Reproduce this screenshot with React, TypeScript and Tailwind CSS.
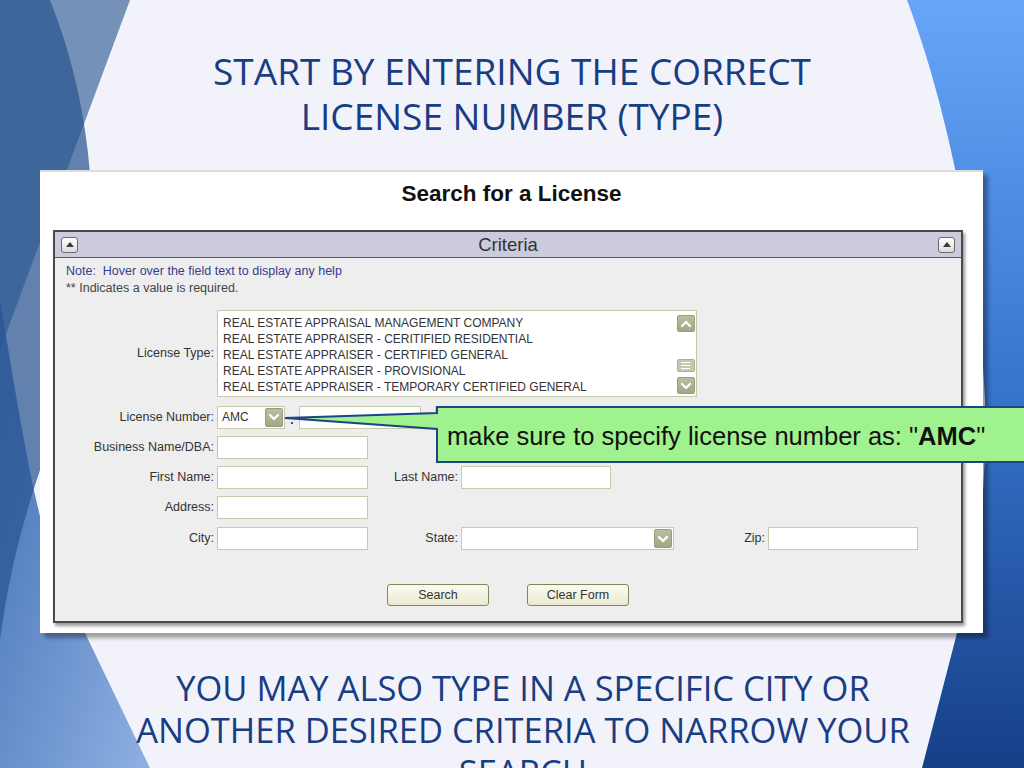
import React from 'react';

const ARIAL = { fontFamily: '"Liberation Sans", Arial, sans-serif' };

const Chevron = ({ up = false }: { up?: boolean }) => (
  <svg width="12" height="10" viewBox="0 0 12 10">
    <path
      d={up ? 'M2 7 L6 3 L10 7' : 'M2 3 L6 7 L10 3'}
      fill="none"
      stroke="#fff"
      strokeWidth="2.4"
      strokeLinecap="round"
      strokeLinejoin="round"
    />
  </svg>
);

const OliveButton = ({ up = false, className = '' }: { up?: boolean; className?: string }) => (
  <div
    className={`flex items-center justify-center rounded-[2px] border border-[#969e7e] bg-gradient-to-b from-[#b8bfa2] to-[#a0a887] ${className}`}
  >
    <Chevron up={up} />
  </div>
);

const CollapseButton = () => (
  <div className="flex h-[16px] w-[17px] items-center justify-center rounded-[3px] border border-[#6b6b6b] bg-gradient-to-b from-white to-[#dcdcdc]">
    <svg width="10" height="7" viewBox="0 0 10 7">
      <path d="M1 6 L5 1 L9 6 Z" fill="#3c3c3c" />
    </svg>
  </div>
);

const TextBox = ({ w, children }: { w: string; children?: React.ReactNode }) => (
  <div className={`flex h-[23px] items-center border border-[#c6ccaa] bg-white px-[4px] text-[12px] text-[#333] ${w}`}>
    {children}
  </div>
);

const Label = ({ w, children }: { w: string; children: React.ReactNode }) => (
  <div className={`shrink-0 pr-[3px] text-right text-[12.5px] text-[#333] ${w}`}>{children}</div>
);

const licenseTypes = [
  'REAL ESTATE APPRAISAL MANAGEMENT COMPANY',
  'REAL ESTATE APPRAISER - CERITIFIED RESIDENTIAL',
  'REAL ESTATE APPRAISER - CERTIFIED GENERAL',
  'REAL ESTATE APPRAISER - PROVISIONAL',
  'REAL ESTATE APPRAISER - TEMPORARY CERTIFIED GENERAL',
];

const Background = () => (
  <svg className="absolute inset-0" width="1024" height="768" viewBox="0 0 1024 768">
    <defs>
      <linearGradient id="rightBlue" x1="0" y1="0" x2="0" y2="1">
        <stop offset="0" stopColor="#67a6f7" />
        <stop offset="0.45" stopColor="#3b7ad2" />
        <stop offset="1" stopColor="#163f88" />
      </linearGradient>
      <linearGradient id="leftLow" x1="0" y1="0" x2="1" y2="1">
        <stop offset="0" stopColor="#3f6eb4" />
        <stop offset="1" stopColor="#8fb0e2" />
      </linearGradient>
    </defs>
    <rect width="1024" height="768" fill="#f2f2fa" />
    <path d="M0 300 C 25 450 45 580 85 633 L150 768 L0 768 Z" fill="url(#leftLow)" />
    <path d="M0 0 L50 0 C 110 150 105 330 40 470 C 20 530 8 580 0 640 Z" fill="#2a5590" opacity="0.72" />
    <path d="M50 0 L130 0 L0 350 L0 0 Z" fill="#2a5590" opacity="0.62" />
    <path
      d="M907 0 C 945 100 978 250 985 400 C 987 520 972 600 957 633 L922 768 L1024 768 L1024 0 Z"
      fill="url(#rightBlue)"
    />
  </svg>
);

const Callout = () => (
  <>
    <svg className="absolute left-0 top-0" width="1024" height="768" viewBox="0 0 1024 768">
      <path
        d="M437 407 L1030 407 L1030 462 L437 462 L437 429 L285 418 L437 413 Z"
        fill="#a0f28e"
        stroke="#1d4585"
        strokeWidth="2"
        strokeLinejoin="miter"
      />
    </svg>
    <div
      className="absolute left-[447px] top-[421px] whitespace-nowrap text-[25.5px] leading-[30px] text-[#111]"
      style={ARIAL}
    >
      make sure to specify license number as: "<b>AMC</b>"
    </div>
  </>
);

const SearchForm = () => (
  <div
    className="ml-[40px] h-[463px] w-[943px] border-t-2 border-[#dcdcdc] bg-white pt-[9px] shadow-[5px_5px_4px_rgba(0,0,0,0.35)]"
    style={ARIAL}
  >
    <div className="text-center text-[22.5px] font-bold leading-[26px] text-[#111]">Search for a License</div>
    <div className="ml-[13px] mt-[23px] h-[393px] w-[910px] border-2 border-[#4a4a4a] bg-[#eeeeee] shadow-[2px_3px_3px_rgba(0,0,0,0.4)]">
      <div className="flex h-[26px] items-center justify-between border-b border-[#555] bg-[#cbcbdd] px-[6px]">
        <CollapseButton />
        <span className="text-[18.5px] text-[#333]">Criteria</span>
        <CollapseButton />
      </div>
      <div className="pl-[11px] pt-[5px] text-[12.5px] leading-[17px]">
        <div className="text-[#3b3b8c]">Note:&nbsp; Hover over the field text to display any help</div>
        <div className="text-[#444]">** Indicates a value is required.</div>
      </div>

      {/* license type */}
      <div className="mt-[13px] flex items-center">
        <Label w="w-[162px]">License Type:</Label>
        <div className="relative h-[87px] w-[480px] border border-[#c6ccaa] bg-white">
          <div className="pl-[5px] pt-[4px] text-[12px] leading-[16px] text-[#333]">
            {licenseTypes.map((t) => (
              <div key={t}>{t}</div>
            ))}
          </div>
          <div className="absolute right-[1px] top-[4px] flex h-[79px] w-[19px] flex-col items-center justify-between">
            <OliveButton up className="h-[17px] w-[18px]" />
            <div className="mt-[26px] flex h-[13px] w-[18px] flex-col items-center justify-center gap-[2px] rounded-[2px] border border-[#a9b28e] bg-[#c4cab0]">
              <div className="h-px w-[9px] bg-white" />
              <div className="h-px w-[9px] bg-white" />
              <div className="h-px w-[9px] bg-white" />
            </div>
            <OliveButton className="mt-[5px] h-[17px] w-[18px]" />
          </div>
        </div>
      </div>

      {/* license number */}
      <div className="mt-[8px] flex items-center">
        <Label w="w-[162px]">License Number:</Label>
        <div className="flex h-[23px] w-[68px] items-center justify-between border border-[#c6ccaa] bg-white pl-[4px] pr-[1px] text-[12px] text-[#333]">
          AMC
          <OliveButton className="h-[19px] w-[18px]" />
        </div>
        <div className="w-[14px] pt-[6px] text-center text-[12px] font-bold text-[#333]">.</div>
        <TextBox w="w-[122px]" />
        <div className="ml-[14px]">
          <TextBox w="w-[85px]" />
        </div>
        <div className="ml-[92px]">
          <TextBox w="w-[85px]" />
        </div>
      </div>

      <div className="mt-[7px] flex items-center">
        <Label w="w-[162px]">Business Name/DBA:</Label>
        <TextBox w="w-[151px]" />
      </div>

      <div className="mt-[7px] flex items-center">
        <Label w="w-[162px]">First Name:</Label>
        <TextBox w="w-[151px]" />
        <Label w="w-[93px]">Last Name:</Label>
        <TextBox w="w-[150px]" />
      </div>

      <div className="mt-[7px] flex items-center">
        <Label w="w-[162px]">Address:</Label>
        <TextBox w="w-[151px]" />
      </div>

      <div className="mt-[8px] flex items-center">
        <Label w="w-[162px]">City:</Label>
        <TextBox w="w-[151px]" />
        <Label w="w-[93px]">State:</Label>
        <div className="flex h-[23px] w-[213px] items-center justify-end border border-[#c6ccaa] bg-white pr-[1px]">
          <OliveButton className="h-[19px] w-[18px]" />
        </div>
        <Label w="w-[94px]">Zip:</Label>
        <TextBox w="w-[150px]" />
      </div>

      <div className="mt-[34px] flex gap-[38px] pl-[332px]">
        {['Search', 'Clear Form'].map((b) => (
          <div
            key={b}
            className="flex h-[22px] w-[102px] items-center justify-center rounded-[3px] border border-[#7c8a57] bg-gradient-to-b from-[#fbfaf0] to-[#ece9d2] text-[12.5px] text-[#333]"
          >
            {b}
          </div>
        ))}
      </div>
    </div>
  </div>
);

export default function App() {
  const heading = { fontFamily: '"Open Sans", "Noto Sans", sans-serif' };
  return (
    <div className="relative h-[768px] w-[1024px] overflow-hidden">
      <Background />
      <div className="relative flex flex-col">
        <div className="pt-[48px] text-center text-[37px] leading-[45px] text-[#183d82]" style={heading}>
          <div>START BY ENTERING THE CORRECT</div>
          <div>LICENSE NUMBER (TYPE)</div>
        </div>
        <div className="mt-[32px]">
          <SearchForm />
        </div>
        <div
          className="ml-[22px] mt-[34px] text-center text-[34.5px] leading-[42px] text-[#183d82]"
          style={heading}
        >
          <div>YOU MAY ALSO TYPE IN A SPECIFIC CITY OR</div>
          <div>ANOTHER DESIRED CRITERIA TO NARROW YOUR</div>
          <div>SEARCH</div>
        </div>
      </div>
      <Callout />
    </div>
  );
}
